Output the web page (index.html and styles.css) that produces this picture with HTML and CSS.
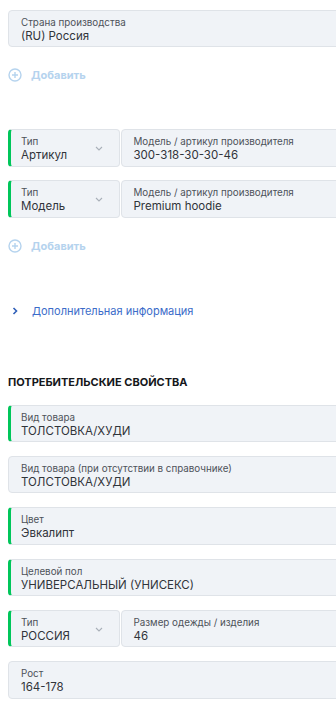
FILE: index.html
```html
<!DOCTYPE html>
<html lang="ru">
<head>
<meta charset="utf-8">
<link rel="stylesheet" href="styles.css">
</head>
<body>
<div class="page">
  <div class="wide">
    <div class="field">
      <div class="label">Страна производства</div>
      <div class="value">(RU) Россия</div>
    </div>
  </div>
  <div class="add add-1">
    <svg class="add-icon" width="14" height="14" viewBox="0 0 14 14"><circle cx="7" cy="7" r="6" fill="none" stroke="currentColor" stroke-width="1.4"/><path d="M7 4v6M4 7h6" stroke="currentColor" stroke-width="1.4"/></svg>
    <span>Добавить</span>
  </div>

  <div class="wide group-2">
    <div class="row">
      <div class="field type req">
        <div class="label">Тип</div>
        <div class="value">Артикул</div>
        <svg class="chev" width="8" height="5" viewBox="0 0 8 5"><path d="M1 1l3 3 3-3" fill="none" stroke="currentColor" stroke-width="1.1"/></svg>
      </div>
      <div class="field grow">
        <div class="label">Модель / артикул производителя</div>
        <div class="value">300-318-30-30-46</div>
      </div>
    </div>
    <div class="row">
      <div class="field type req">
        <div class="label">Тип</div>
        <div class="value">Модель</div>
        <svg class="chev" width="8" height="5" viewBox="0 0 8 5"><path d="M1 1l3 3 3-3" fill="none" stroke="currentColor" stroke-width="1.1"/></svg>
      </div>
      <div class="field grow">
        <div class="label">Модель / артикул производителя</div>
        <div class="value">Premium hoodie</div>
      </div>
    </div>
  </div>
  <div class="add add-2">
    <svg class="add-icon" width="14" height="14" viewBox="0 0 14 14"><circle cx="7" cy="7" r="6" fill="none" stroke="currentColor" stroke-width="1.4"/><path d="M7 4v6M4 7h6" stroke="currentColor" stroke-width="1.4"/></svg>
    <span>Добавить</span>
  </div>

  <div class="more">
    <svg class="more-chev" width="6" height="8" viewBox="0 0 6 8"><path d="M1.5 1l3 3-3 3" fill="none" stroke="currentColor" stroke-width="1.6"/></svg>
    <span>Дополнительная информация</span>
  </div>

  <h2 class="heading">Потребительские свойства</h2>

  <div class="wide stack">
    <div class="field req">
      <div class="label">Вид товара</div>
      <div class="value">ТОЛСТОВКА/ХУДИ</div>
    </div>
    <div class="field">
      <div class="label">Вид товара (при отсутствии в справочнике)</div>
      <div class="value">ТОЛСТОВКА/ХУДИ</div>
    </div>
    <div class="field req">
      <div class="label">Цвет</div>
      <div class="value">Эвкалипт</div>
    </div>
    <div class="field req">
      <div class="label">Целевой пол</div>
      <div class="value">УНИВЕРСАЛЬНЫЙ (УНИСЕКС)</div>
    </div>
    <div class="row">
      <div class="field type req">
        <div class="label">Тип</div>
        <div class="value">РОССИЯ</div>
        <svg class="chev" width="8" height="5" viewBox="0 0 8 5"><path d="M1 1l3 3 3-3" fill="none" stroke="currentColor" stroke-width="1.1"/></svg>
      </div>
      <div class="field grow">
        <div class="label">Размер одежды / изделия</div>
        <div class="value">46</div>
      </div>
    </div>
    <div class="field">
      <div class="label">Рост</div>
      <div class="value">164-178</div>
    </div>
  </div>
</div>
</body>
</html>
```

FILE: styles.css
```css
* { box-sizing: border-box; }
html, body { margin: 0; padding: 0; background: #ffffff; }
body {
  font-family: Inter, "Noto Sans", sans-serif;
  color: #2a2e33;
  overflow: hidden;
}
.page {
  width: 336px;
  height: 707px;
  overflow: hidden;
  padding: 10px 0 0 8px;
}
.wide { width: 420px; }
.stack { display: flex; flex-direction: column; gap: 14px; margin-top: 15px; }
.group-2 { display: flex; flex-direction: column; gap: 13.7px; margin-top: 44.3px; }
.row { display: flex; gap: 1px; }
.field {
  position: relative;
  height: 37.4px;
  background: #f0f3f7;
  border: 1px solid #dfe3e8;
  border-radius: 4px;
  padding: 5px 12px 0 12px;
  display: flex;
  flex-direction: column;
}
.field.req { border-left: 3px solid #00c65a; padding-left: 10px; }
.field.type { width: 111.5px; flex: none; }
.field.grow { flex: 1; }
.label {
  font-size: 9.8px;
  line-height: 13px;
  color: #4d5259;
  white-space: nowrap;
}
.value {
  font-size: 11.5px;
  line-height: 14px;
  color: #30343a;
  white-space: nowrap;
}
.chev {
  position: absolute;
  right: 16px;
  top: 16px;
  color: #a9b0b9;
}
.add {
  display: flex;
  align-items: center;
  gap: 9px;
  height: 20px;
  color: #b5d3ee;
  font-size: 11px;
  font-weight: 700;
}
.add-1 { margin-top: 17.7px; }
.add-2 { margin-top: 18px; }
.add-icon { flex: none; }
.more {
  display: flex;
  align-items: center;
  height: 20px;
  margin-top: 44.7px;
  color: #3b6cc9;
  font-size: 11px;
}
.more-chev { margin-left: 4px; margin-right: 14px; color: #2f5fb8; }
.heading {
  margin: 53px 0 0 0;
  height: 16px;
  line-height: 16px;
  font-size: 11px;
  font-weight: 700;
  text-transform: uppercase;
  color: #15171a;
}
```
